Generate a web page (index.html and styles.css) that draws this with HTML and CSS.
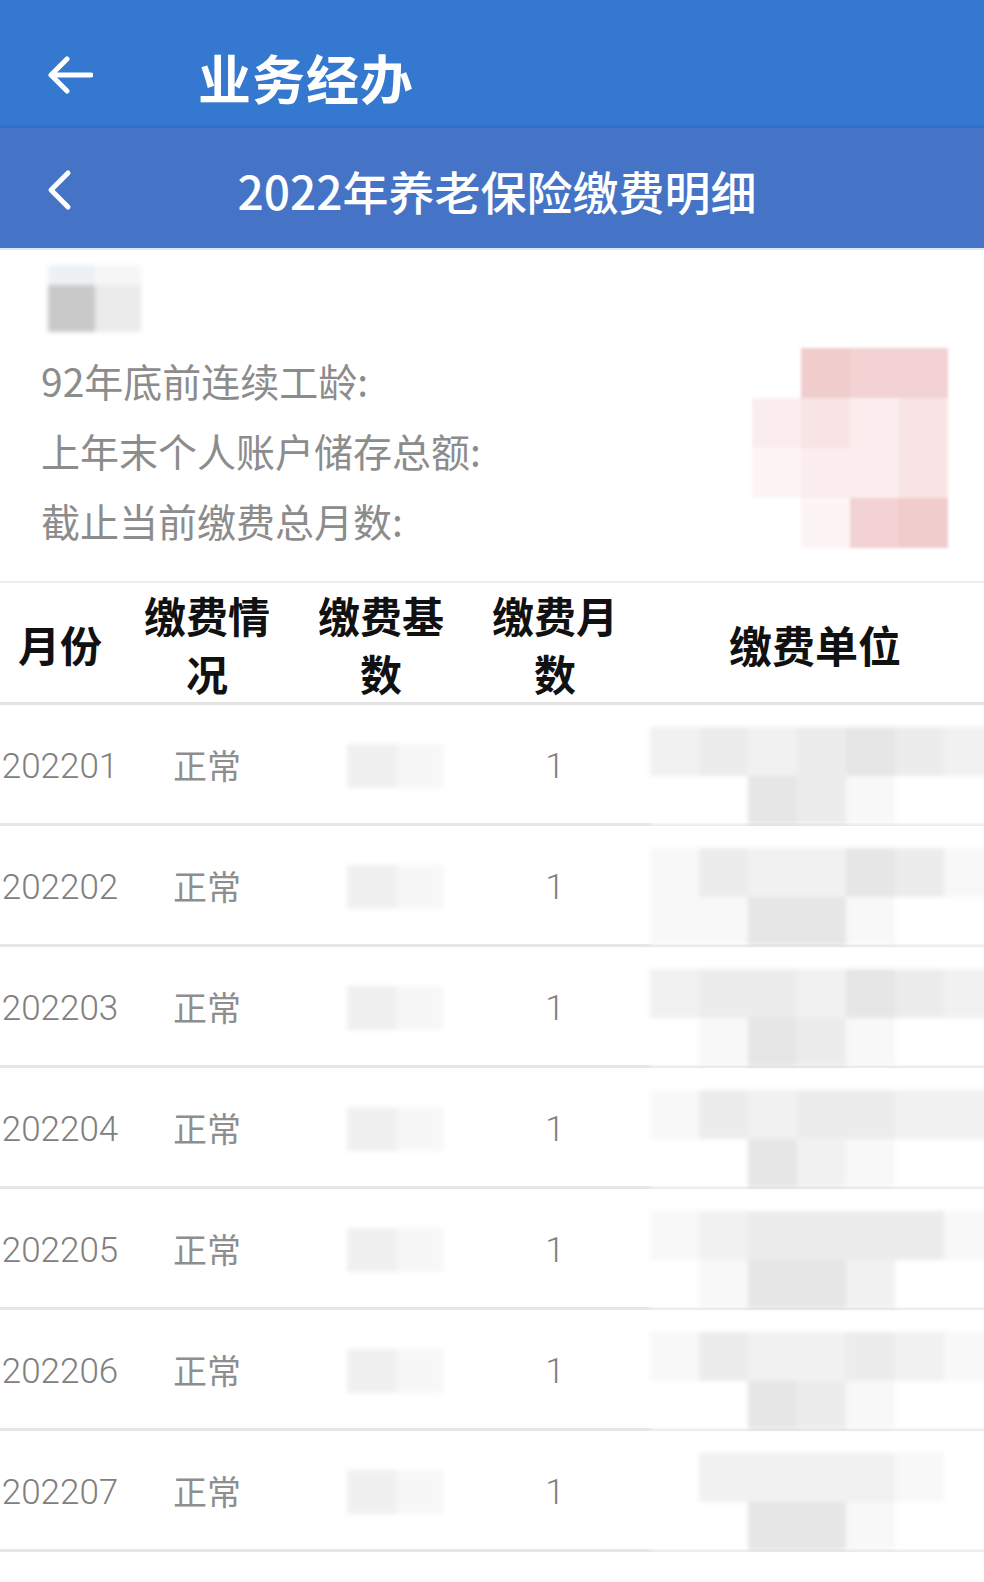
FILE: index.html
```html
<!DOCTYPE html>
<html lang="zh-CN">
<head>
<meta charset="utf-8">
<title>2022年养老保险缴费明细</title>
<link rel="stylesheet" href="styles.css">
</head>
<body>
<div class="page">
  <header class="appbar">
    <svg class="back-arrow" viewBox="0 0 46 40" width="46" height="40">
      <path d="M44 20 H4 M20 4 L4 20 L20 36" fill="none" stroke="#fff" stroke-width="5" stroke-linecap="round" stroke-linejoin="round"/>
    </svg>
    <h1 class="appbar-title">业务经办</h1>
  </header>
  <div class="subbar">
    <svg class="chevron" viewBox="0 0 28 42" width="28" height="42">
      <path d="M22 4 L5 21 L22 38" fill="none" stroke="#fff" stroke-width="5" stroke-linecap="round" stroke-linejoin="round"/>
    </svg>
    <h2 class="subbar-title">2022年养老保险缴费明细</h2>
  </div>

  <section class="info">
    <div class="name-mosaic">
      <span class="m n0"></span><span class="m n1"></span>
      <span class="m n2"></span><span class="m n3"></span>
    </div>
    <div class="info-body">
      <ul class="info-lines">
        <li>92年底前连续工龄:</li>
        <li>上年末个人账户储存总额:</li>
        <li>截止当前缴费总月数:</li>
      </ul>
      <div class="pink-mosaic">
        <span class="p w"></span><span class="p a"></span><span class="p b"></span><span class="p b"></span>
        <span class="p d"></span><span class="p c"></span><span class="p d"></span><span class="p c"></span>
        <span class="p e"></span><span class="p d"></span><span class="p d"></span><span class="p c"></span>
        <span class="p w"></span><span class="p e"></span><span class="p b"></span><span class="p a"></span>
      </div>
    </div>
  </section>

  <div class="table">
    <div class="thead">
      <div class="th">月份</div>
      <div class="th">缴费情<br>况</div>
      <div class="th">缴费基<br>数</div>
      <div class="th">缴费月<br>数</div>
      <div class="th">缴费单位</div>
    </div>

    <div class="tr">
      <div class="td num">202201</div>
      <div class="td">正常</div>
      <div class="td base"><span class="base-blur"><span class="bb1"></span><span class="bb2"></span></span></div>
      <div class="td num">1</div>
      <div class="td unit"><span class="unit-mosaic"><span class="u g1"></span><span class="u g2"></span><span class="u g1"></span><span class="u g2"></span><span class="u g3"></span><span class="u g2"></span><span class="u g1"></span><span class="u w"></span><span class="u w"></span><span class="u g3"></span><span class="u g2"></span><span class="u g0"></span><span class="u w"></span><span class="u w"></span></span></div>
    </div>
    <div class="tr">
      <div class="td num">202202</div>
      <div class="td">正常</div>
      <div class="td base"><span class="base-blur"><span class="bb1"></span><span class="bb2"></span></span></div>
      <div class="td num">1</div>
      <div class="td unit"><span class="unit-mosaic"><span class="u g0"></span><span class="u g2"></span><span class="u g1"></span><span class="u g1"></span><span class="u g3"></span><span class="u g2"></span><span class="u g0"></span><span class="u g0"></span><span class="u g0"></span><span class="u g3"></span><span class="u g3"></span><span class="u g0"></span><span class="u w"></span><span class="u w"></span></span></div>
    </div>
    <div class="tr">
      <div class="td num">202203</div>
      <div class="td">正常</div>
      <div class="td base"><span class="base-blur"><span class="bb1"></span><span class="bb2"></span></span></div>
      <div class="td num">1</div>
      <div class="td unit"><span class="unit-mosaic"><span class="u g1"></span><span class="u g2"></span><span class="u g2"></span><span class="u g1"></span><span class="u g3"></span><span class="u g2"></span><span class="u g1"></span><span class="u w"></span><span class="u g0"></span><span class="u g3"></span><span class="u g2"></span><span class="u g0"></span><span class="u w"></span><span class="u w"></span></span></div>
    </div>
    <div class="tr">
      <div class="td num">202204</div>
      <div class="td">正常</div>
      <div class="td base"><span class="base-blur"><span class="bb1"></span><span class="bb2"></span></span></div>
      <div class="td num">1</div>
      <div class="td unit"><span class="unit-mosaic"><span class="u g0"></span><span class="u g2"></span><span class="u g1"></span><span class="u g2"></span><span class="u g2"></span><span class="u g1"></span><span class="u g1"></span><span class="u w"></span><span class="u w"></span><span class="u g3"></span><span class="u g1"></span><span class="u g0"></span><span class="u w"></span><span class="u w"></span></span></div>
    </div>
    <div class="tr">
      <div class="td num">202205</div>
      <div class="td">正常</div>
      <div class="td base"><span class="base-blur"><span class="bb1"></span><span class="bb2"></span></span></div>
      <div class="td num">1</div>
      <div class="td unit"><span class="unit-mosaic"><span class="u g0"></span><span class="u g1"></span><span class="u g2"></span><span class="u g2"></span><span class="u g2"></span><span class="u g2"></span><span class="u g0"></span><span class="u w"></span><span class="u g0"></span><span class="u g3"></span><span class="u g3"></span><span class="u g1"></span><span class="u w"></span><span class="u w"></span></span></div>
    </div>
    <div class="tr">
      <div class="td num">202206</div>
      <div class="td">正常</div>
      <div class="td base"><span class="base-blur"><span class="bb1"></span><span class="bb2"></span></span></div>
      <div class="td num">1</div>
      <div class="td unit"><span class="unit-mosaic"><span class="u g0"></span><span class="u g2"></span><span class="u g1"></span><span class="u g1"></span><span class="u g2"></span><span class="u g1"></span><span class="u g0"></span><span class="u w"></span><span class="u w"></span><span class="u g3"></span><span class="u g2"></span><span class="u g0"></span><span class="u w"></span><span class="u w"></span></span></div>
    </div>
    <div class="tr">
      <div class="td num">202207</div>
      <div class="td">正常</div>
      <div class="td base"><span class="base-blur"><span class="bb1"></span><span class="bb2"></span></span></div>
      <div class="td num">1</div>
      <div class="td unit"><span class="unit-mosaic"><span class="u w"></span><span class="u g1"></span><span class="u g1"></span><span class="u g1"></span><span class="u g1"></span><span class="u g0"></span><span class="u w"></span><span class="u w"></span><span class="u w"></span><span class="u g3"></span><span class="u g3"></span><span class="u g0"></span><span class="u w"></span><span class="u w"></span></span></div>
    </div>
  </div>
</div>
</body>
</html>
```

FILE: styles.css
```css
* { box-sizing: border-box; }
html, body { margin: 0; padding: 0; background: #fff; }
body {
  font-family: "Noto Sans CJK SC", "Noto Sans", sans-serif;
  width: 984px;
}
.page { width: 984px; }

.appbar {
  height: 128px;
  background: #3478d0;
  display: flex;
  align-items: center;
  padding-left: 47px;
  padding-top: 26px;
  box-shadow: inset 0 -3px 3px -2px rgba(20, 50, 110, 0.25);
}
.back-arrow { display: block; margin-top: -4px; }
.appbar-title {
  margin: 0 0 0 105px;
  color: #fff;
  font-size: 53px;
  font-weight: 700;
  line-height: 1;
  letter-spacing: 1px;
}

.subbar {
  height: 122px;
  background: #4574c6;
  display: flex;
  align-items: center;
  position: relative;
  padding-left: 46px;
  padding-top: 4px;
  border-bottom: 2px solid #dbe8f5;
}
.chevron { display: block; }
.subbar-title {
  position: absolute;
  left: 0;
  right: 0;
  text-align: center;
  margin: 0;
  color: #fff;
  font-size: 46px;
  font-weight: 500;
  line-height: 1;
  padding-left: 10px;
}

.info {
  padding: 15px 0 26px 0;
  border-bottom: 2px solid #eeeeee;
}
.name-mosaic {
  margin-left: 48px;
  display: grid;
  grid-template-columns: 47px 46px;
  grid-template-rows: 20px 47px;
  width: 93px;
  filter: blur(2px);
}
.name-mosaic .m { display: block; }
.n0 { background: #eef1f4; }
.n1 { background: #f6f6f6; }
.n2 { background: #c9c9c9; }
.n3 { background: #ebebeb; }

.info-body {
  display: flex;
  justify-content: space-between;
  align-items: flex-start;
  margin-top: 13px;
}
.info-lines {
  list-style: none;
  margin: 0;
  padding: 0 0 0 41px;
}
.info-lines li {
  font-size: 39px;
  line-height: 70px;
  height: 70px;
  color: #8c8c8c;
  font-weight: 400;
}
.pink-mosaic {
  display: grid;
  grid-template-columns: repeat(4, 49px);
  grid-template-rows: repeat(4, 50px);
  margin-right: 36px;
  margin-top: 3px;
  filter: blur(1.5px);
}
.pink-mosaic .p { display: block; }
.p.w { background: #ffffff; }
.p.a { background: #f1cccc; }
.p.b { background: #f2d2d2; }
.p.c { background: #f8e4e4; }
.p.d { background: #fbeded; }
.p.e { background: #fdf5f5; }

.table { width: 984px; }
.thead, .tr {
  display: grid;
  grid-template-columns: 120px 174px 174px 174px 342px;
  align-items: center;
}
.thead {
  height: 122px;
  border-bottom: 3px solid #e4e4e4;
  padding-top: 2px;
}
.th {
  text-align: center;
  font-size: 42px;
  font-weight: 700;
  line-height: 58px;
  color: #111;
}
.th:last-child { font-size: 43px; padding-left: 4px; }
.tr {
  height: 121px;
  border-bottom: 3px solid #e6e6e6;
}
.td {
  text-align: center;
  font-size: 34px;
  color: #8e8e8e;
  font-weight: 400;
  line-height: 1;
}
.td.num {
  font-family: "Roboto", "Noto Sans CJK SC", sans-serif;
  font-weight: 300;
  font-size: 35px;
  color: #808080;
  padding-top: 4px;
}
.td.base { text-align: left; padding-left: 53px; }
.base-blur {
  display: inline-flex;
  filter: blur(2px);
  margin-top: 6px;
}
.base-blur span { display: block; height: 44px; }
.bb1 { width: 50px; background: #f0f0f0; }
.bb2 { width: 46px; background: #f7f7f7; }

.td.unit {
  align-self: start;
  text-align: left;
  padding-left: 8px;
  padding-top: 22px;
}
.unit-mosaic {
  display: grid;
  grid-template-columns: repeat(7, 49px);
  grid-template-rows: 49px 48px;
  filter: blur(2px);
}
.unit-mosaic .u { display: block; }
.u.w { background: #ffffff; }
.u.g0 { background: #f8f8f8; }
.u.g1 { background: #f1f1f1; }
.u.g2 { background: #ececec; }
.u.g3 { background: #e6e6e6; }
```
